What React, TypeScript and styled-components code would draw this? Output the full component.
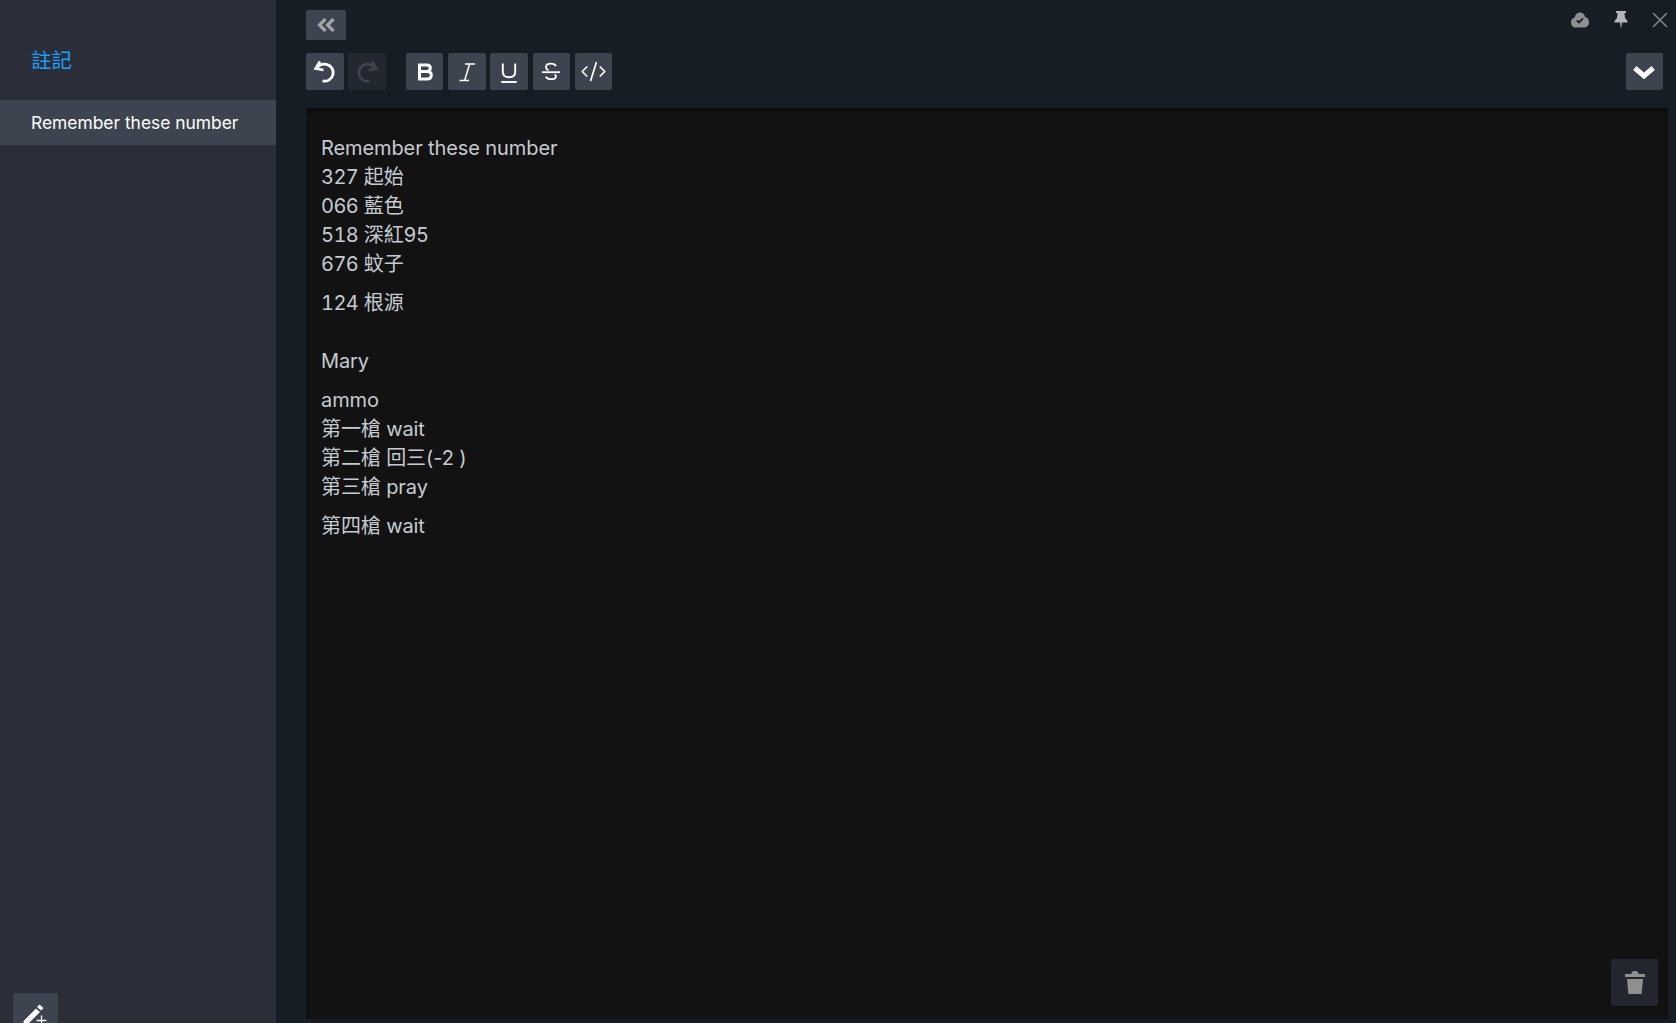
import React from "react";
import styled, { createGlobalStyle } from "styled-components";
import { CodeXml } from "lucide-react";

const Global = createGlobalStyle`
  html, body { margin: 0; padding: 0; height: 100%; background: #171d25; overflow: hidden; }
  #root { height: 100%; }
  * { box-sizing: border-box; }
`;

const FONT = `Inter, "Noto Sans CJK TC", sans-serif`;

const Shell = styled.div`
  display: flex;
  height: 1023px;
  overflow: hidden;
  font-family: ${FONT};
  background: #171d25;
`;

const Sidebar = styled.aside`
  width: 276px;
  flex: none;
  height: 1038px;
  background: #2b2e38;
  display: flex;
  flex-direction: column;
`;

const SidebarTitle = styled.div`
  height: 100px;
  padding: 18px 0 0 31px;
  display: flex;
  align-items: center;
  color: #1a9fff;
  font-size: 20.5px;
`;

const NoteRow = styled.div`
  height: 45px;
  background: #3d4450;
  color: #ffffff;
  font-size: 17.4px;
  display: flex;
  align-items: center;
  padding-left: 31px;
`;

const SidebarFoot = styled.div`
  margin-top: auto;
  padding: 0 0 0 13px;
`;

const IconButton = styled.button<{ $w?: number; $h?: number; $muted?: boolean }>`
  width: ${(p) => p.$w ?? 37.5}px;
  height: ${(p) => p.$h ?? 37}px;
  flex: none;
  padding: 0;
  border: none;
  border-radius: 2px;
  background: ${(p) => (p.$muted ? "#23272f" : "#3d4450")};
  color: ${(p) => (p.$muted ? "#3d4450" : "#ffffff")};
  display: flex;
  align-items: center;
  justify-content: center;
`;

const Main = styled.main`
  flex: 1;
  min-width: 0;
  display: flex;
  flex-direction: column;
  padding: 10px 8px 4px 30px;
`;

const TopRow = styled.div`
  height: 30px;
  display: flex;
  align-items: flex-start;
  justify-content: space-between;
`;

const WindowIcons = styled.div`
  display: flex;
  align-items: center;
  gap: 24px;
`;

const Toolbar = styled.div`
  margin-top: 13px;
  height: 37px;
  display: flex;
  align-items: center;
`;

const Group = styled.div`
  display: flex;
  gap: 4.7px;
`;

const FormatGroup = styled(Group)`
  margin-left: 20.3px;
`;

const Spacer = styled.div`
  flex: 1;
`;

const ChevronButton = styled(IconButton)`
  margin-right: 5px;
`;

const Editor = styled.section`
  position: relative;
  margin-top: 18px;
  flex: 1;
  background: #121212;
  box-shadow: inset 0 4px 5px -2px rgba(0, 0, 0, 0.45);
  color: #c6cbd1;
  font-size: 20px;
  letter-spacing: -0.1px;
  line-height: 29px;
  padding: 26px 15px;
`;

const Para = styled.p`
  margin: 0 0 10px;
`;

const BlankPara = styled.p`
  margin: 0 0 -10px;
  height: 29px;
`;

const Num = styled.span`
  font-variant-numeric: tabular-nums;
  letter-spacing: -0.55px;
`;

const TrashButton = styled(IconButton)`
  position: absolute;
  right: 10px;
  bottom: 13px;
  width: 47px;
  height: 47px;
  background: #23262e;
  color: #8f8f8f;
`;

const HookPath = () => (
  <>
    <path d="M9 3.5 L4.7 10.5 L12.5 12" />
    <path d="M5.5 10.3 C8.5 6.5 12.5 5.6 15.5 6.4 C20.5 7.6 23 12 22 16.5 C21 21 16.5 24 11.5 23" />
  </>
);

const UndoIcon = () => (
  <svg width="28" height="28" viewBox="0 0 28 28" fill="none" stroke="currentColor" strokeWidth="2.8">
    <HookPath />
  </svg>
);

const RedoIcon = () => (
  <svg width="28" height="28" viewBox="0 0 28 28" fill="none" stroke="currentColor" strokeWidth="2.8">
    <g transform="translate(28 0) scale(-1 1)">
      <HookPath />
    </g>
  </svg>
);

const DoubleLeft = () => (
  <svg width="20" height="18" viewBox="0 0 20 18" fill="none" stroke="#a2a4a8" strokeWidth="3.2">
    <path d="M9.5 3 L3.5 9 L9.5 15" />
    <path d="M17.5 3 L11.5 9 L17.5 15" />
  </svg>
);

const BoldIcon = () => (
  <svg width="20" height="20" viewBox="0 0 20 20" fill="none" stroke="#fff" strokeWidth="3" strokeLinejoin="round">
    <path d="M4.5 3 H11.8 C14.2 3 15.3 4.3 15.3 6 C15.3 8 14 9.5 11.8 9.5 H4.5 M11.8 9.5 C14.8 9.5 16.3 11 16.3 13 C16.3 15.4 14.8 17 11.8 17 H4.5 V1.5 M4.5 17 V18.5" />
  </svg>
);

const ItalicIcon = () => (
  <svg width="20" height="22" viewBox="0 0 20 22" fill="none" stroke="#fff" strokeWidth="1.5">
    <path d="M8 3 H18 M2.5 19.5 H12 M12.6 3 L7.6 19.5" />
  </svg>
);

const UnderlineIcon = () => (
  <svg width="20" height="24" viewBox="0 0 20 24" fill="none" stroke="#fff" strokeWidth="1.9">
    <path d="M3.8 3.5 V12 C3.8 15.8 6.2 17.2 10 17.2 C13.8 17.2 16.2 15.8 16.2 12 V3.5" />
    <path d="M2.2 22 H17.8" />
  </svg>
);

const StrikeIcon = () => (
  <svg width="20" height="24" viewBox="0 0 20 24" fill="none" stroke="#fff" strokeWidth="1.8">
    <path d="M15 6 C14 4.3 12.5 3.6 10 3.6 C7 3.6 5 5 5 7 C5 8.6 5.8 9.6 7.5 10.2" />
    <path d="M1 12.2 H19" />
    <path d="M13.6 14.4 C14.6 15 15 15.5 15 16.2 C15 18.2 13 19.2 10 19.2 C7.5 19.2 5.6 18.4 4.8 16.6" />
  </svg>
);

const CloudCheck = () => (
  <svg width="20" height="16" viewBox="0 0 20 16">
    <path fill="#8e8e8e" d="M10 0.5 C12.8 0.5 14.8 2.5 15 5 C17.6 5.4 19 7.5 19 10 C19 13.2 17 15.5 14.3 15.5 L5.4 15.5 C2.8 15.5 1 13.2 1 10.4 C1 8 2.2 6 4.6 5.4 C5 2.6 7.2 0.5 10 0.5 Z" />
    <path fill="none" stroke="#171d25" strokeWidth="1.8" d="M6.8 8.4 L9 10.4 L13 6.4" />
  </svg>
);

const Pin = () => (
  <svg width="14" height="20" viewBox="0 0 14 20" fill="#b4b6b9">
    <path d="M2 1 H12 V3 H10.5 L11 8 L13.5 11 V12.5 H.5 V11 L3 8 L3.5 3 H2 Z" />
    <path d="M6 12.5 H8 L7 19 Z" />
  </svg>
);

const CloseIcon = () => (
  <svg width="16" height="16" viewBox="0 0 16 16" fill="none" stroke="#7a8690" strokeWidth="1.6">
    <path d="M1 1 L15 15 M15 1 L1 15" />
  </svg>
);

const Chevron = () => (
  <svg width="26" height="18" viewBox="0 0 26 18" fill="none" stroke="#fff" strokeWidth="5">
    <path d="M3.8 5 L13 13 L22.2 5" />
  </svg>
);

const Trash = () => (
  <svg width="22" height="26" viewBox="0 0 22 26" fill="currentColor">
    <path d="M8 2.5 C8 1.5 9 1 11 1 C13 1 14 1.5 14 2.5 L15 4 H21 V7 H1 V4 H7 Z" />
    <path d="M3 9 H19 L17.6 24 H4.4 Z" />
  </svg>
);

const PencilPlus = () => (
  <svg width="34" height="34" viewBox="0 0 34 34" fill="#fff">
    <path d="M20.5 5.5 L24.5 9 L22 11.5 L18 8 Z" />
    <path d="M17 9.5 L21 13 L9 25 L3 28 L5 21.5 Z" />
    <path d="M21.8 16.5 H23.2 V20.8 H27.5 V22.2 H23.2 V26.5 H21.8 V22.2 H17.5 V20.8 H21.8 Z" />
  </svg>
);

export default function App() {
  return (
    <>
      <Global />
      <Shell>
        <Sidebar>
          <SidebarTitle>註記</SidebarTitle>
          <NoteRow>Remember these number</NoteRow>
          <SidebarFoot>
            <IconButton $w={45} $h={45}>
              <PencilPlus />
            </IconButton>
          </SidebarFoot>
        </Sidebar>
        <Main>
          <TopRow>
            <IconButton $w={40} $h={30}>
              <DoubleLeft />
            </IconButton>
            <WindowIcons>
              <CloudCheck />
              <Pin />
              <CloseIcon />
            </WindowIcons>
          </TopRow>
          <Toolbar>
            <Group>
              <IconButton>
                <UndoIcon />
              </IconButton>
              <IconButton $muted>
                <RedoIcon />
              </IconButton>
            </Group>
            <FormatGroup>
              <IconButton>
                <BoldIcon />
              </IconButton>
              <IconButton>
                <ItalicIcon />
              </IconButton>
              <IconButton>
                <UnderlineIcon />
              </IconButton>
              <IconButton>
                <StrikeIcon />
              </IconButton>
              <IconButton>
                <CodeXml size={27} strokeWidth={1.5} />
              </IconButton>
            </FormatGroup>
            <Spacer />
            <ChevronButton>
              <Chevron />
            </ChevronButton>
          </Toolbar>
          <Editor>
            <Para>
              Remember these number
              <br />
              <Num>327</Num> 起始
              <br />
              <Num>066</Num> 藍色
              <br />
              <Num>518</Num> 深紅<Num>95</Num>
              <br />
              <Num>676</Num> 蚊子
            </Para>
            <Para>
              <Num>124</Num> 根源
            </Para>
            <BlankPara />
            <Para>Mary</Para>
            <Para>
              ammo
              <br />
              第一槍 wait
              <br />
              第二槍 回三(-2 )
              <br />
              第三槍 pray
            </Para>
            <Para>第四槍 wait</Para>
            <TrashButton>
              <Trash />
            </TrashButton>
          </Editor>
        </Main>
      </Shell>
    </>
  );
}
